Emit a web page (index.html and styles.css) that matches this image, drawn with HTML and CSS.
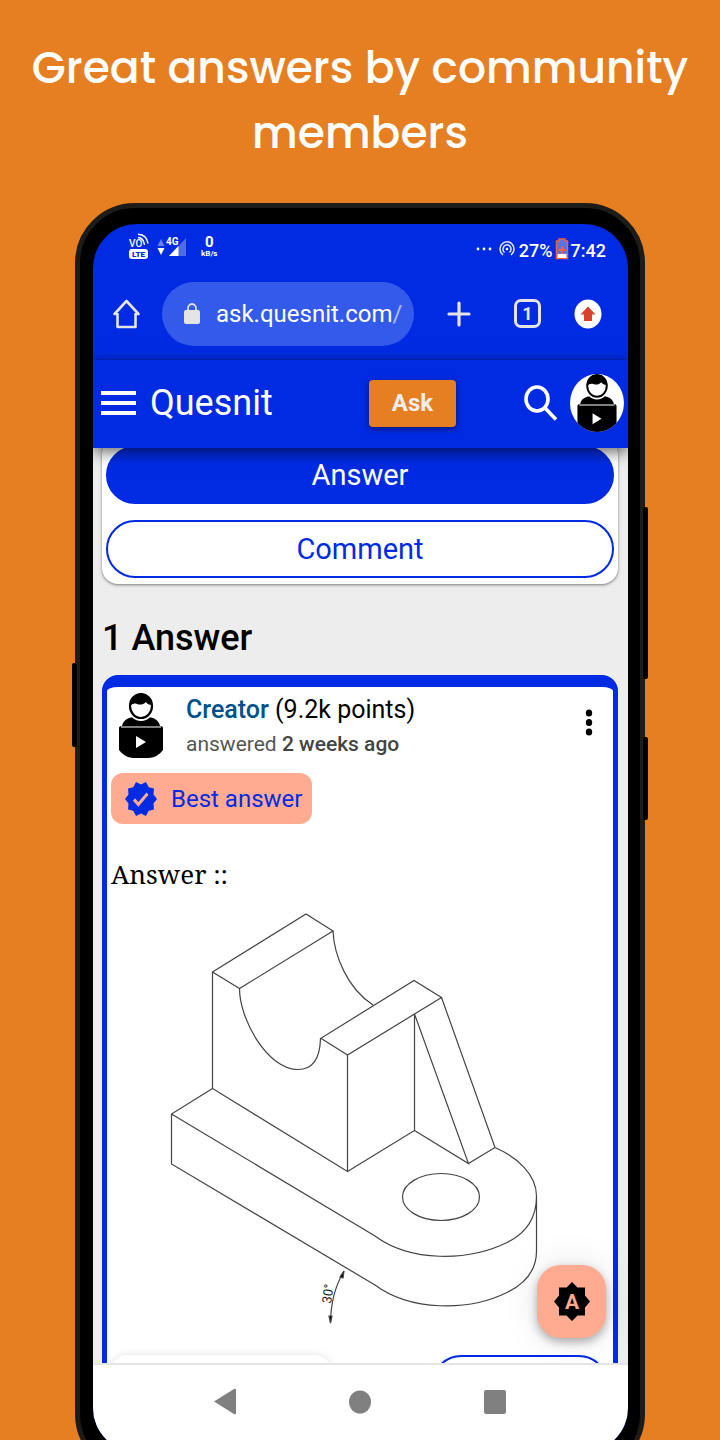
FILE: index.html
```html
<!DOCTYPE html>
<html lang="en">
<head>
<meta charset="utf-8">
<meta name="viewport" content="width=device-width, initial-scale=1">
<title>Quesnit – Great answers by community members</title>
<link rel="stylesheet" href="styles.css">
</head>
<body>
<svg class="defs" aria-hidden="true">
  <symbol id="person" viewBox="0 0 54 68" preserveAspectRatio="none">
    <path d="M8 34c0-6 6-10 13-10h12c7 0 13 4 13 10z"/>
    <ellipse cx="27" cy="14" rx="13" ry="14" fill="#fff"/>
    <ellipse cx="27" cy="13" rx="11" ry="12" fill="#fff" stroke="#000" stroke-width="2.200"/>
    <path d="M16 13C15 5 20 1 27 1s12 5 11 11c-3 0-5-1-6-3-3 3-6 3-9 2-3-1-5 0-7 2z"/>
    <path d="M5 35q0-2 3-2h38q3 0 3 2v22q-5 7-14 8H19Q10 64 5 57z"/>
    <path d="M7 34h40" stroke="#aaa" stroke-width="1.500"/>
    <path d="M22 43l10 6-10 6z" fill="#fff"/>
  </symbol>
</svg>
<main class="poster">
  <h1 class="headline">Great answers by community members</h1>
  <div class="phone">
    <span class="key key-left"></span>
    <span class="key key-power"></span>
    <span class="key key-volume"></span>
    <div class="screen">
      <div class="status">
        <svg class="volte" width="20" height="28" viewBox="0 0 20 28" role="img" aria-label="VoLTE">
          <text x="0" y="14" font-size="10" font-weight="500" fill="#fff">VO</text>
          <path d="M9 4.500q5.500 0 6.500 7.500M9 1.200q9 .500 10 9.500" fill="none" stroke="#fff" stroke-width="1.400"/>
          <rect y="16" width="19" height="10" rx="3" fill="#fff"/>
          <text x="9.500" y="24" font-size="8" font-weight="900" text-anchor="middle" fill="#002be3">LTE</text>
        </svg>
        <svg width="30" height="24" viewBox="0 0 30 24" role="img" aria-label="4G signal">
          <path d="M4 4l3.500 7h-7z" fill="#6680ee"/><path d="M.500 13h7L4 20z" fill="#fff"/>
          <path d="M29 3v18H12z" fill="#4d6cec"/><path d="M21.500 11v10H12z" fill="#fff"/>
          <text x="9" y="10" font-size="10" font-weight="700" fill="#fff">4G</text>
        </svg>
        <span class="rate"><b>0</b><small>kB/s</small></span>
        <span class="status-right">
          <svg width="16" height="8" viewBox="0 0 16 8" fill="#fff"><circle cx="2" cy="4" r="1.400"/><circle cx="8" cy="4" r="1.400"/><circle cx="14" cy="4" r="1.400"/></svg>
          <svg class="hotspot" width="16" height="18" viewBox="0 0 16 18" fill="none" stroke="#e4e8ff" stroke-width="1.500"><path d="M4 15A7 7.300 0 1 1 12 15M5.500 12.500A4 4.300 0 1 1 10.500 12.500"/><circle cx="8" cy="9" r="1.300" fill="#fff" stroke="none"/></svg>
          <span>27%</span>
          <svg width="14" height="22" viewBox="0 0 14 22"><path d="M1.500 3h2.500V1h6v2h2.500v17.500h-11z" fill="#5872e8" stroke="#f0623c" stroke-width="1.500"/><path d="M7 8v8M3.500 12h7" stroke="#f0623c" stroke-width="2"/><path d="M2.500 16h9v4h-9z" fill="#fff"/></svg>
          <time>7:42</time>
        </span>
      </div>
      <div class="browser">
        <button class="icon-btn" aria-label="Home"><svg width="28" height="30" viewBox="0 0 28 30" fill="none" stroke="#e4e4e4" stroke-width="2.600" stroke-linejoin="round" stroke-linecap="round"><path d="M1.500 15L13.500 2l12 13h-3V28h-18V15z"/></svg></button>
        <a class="url" href="#"><svg width="16" height="22" viewBox="0 0 16 22"><rect y="7" width="16" height="14" rx="2" fill="#e4e4e4"/><path d="M4 8V5.500a4 4.500 0 0 1 8 0V8" fill="none" stroke="#e4e4e4" stroke-width="1.800"/></svg><span>ask.quesnit.com<i>/</i></span></a>
        <button class="icon-btn" aria-label="New tab"><svg width="24" height="26" viewBox="0 0 24 26" stroke="#e4e4e4" stroke-width="3.200" stroke-linecap="round"><path d="M12 2v22M2 13h20"/></svg></button>
        <button class="icon-btn tabs" aria-label="Tabs">1</button>
        <button class="icon-btn" aria-label="Update browser"><svg width="28" height="30" viewBox="0 0 28 30"><ellipse cx="14" cy="15" rx="13.500" ry="14.500" fill="#fff"/><path d="M14 7.500l7.500 8H18V22h-8v-6.500H6.500z" fill="#d9412f"/></svg></button>
      </div>
      <header class="appbar">
        <button class="icon-btn" aria-label="Menu"><svg width="35" height="26" viewBox="0 0 35 26" stroke="#fff" stroke-width="4"><path d="M0 3h35M0 13h35M0 23h35"/></svg></button>
        <a class="brand" href="#">Quesnit</a>
        <button class="ask">Ask</button>
        <button class="icon-btn" aria-label="Search"><svg width="34" height="36" viewBox="0 0 34 36" fill="none" stroke="#fff" stroke-width="3.600"><ellipse cx="13" cy="14" rx="11" ry="12"/><path d="M20.500 22.500l11.500 12"/></svg></button>
        <a class="me" href="#" aria-label="Profile"><svg width="48" height="62"><use href="#person" width="48" height="62"/></svg></a>
      </header>
      <div class="content">
        <section class="question">
          <button class="pill pill-solid">Answer</button>
          <button class="pill">Comment</button>
        </section>
        <h2 class="count">1 Answer</h2>
        <article class="answer">
          <div class="author">
            <svg class="avatar" width="54" height="68"><use href="#person" width="54" height="68"/></svg>
            <div class="who">
              <p class="name"><a href="#">Creator</a> (9.2k points)</p>
              <p class="when">answered <b>2 weeks ago</b></p>
            </div>
            <button class="icon-btn more" aria-label="More options"><svg width="8" height="28" viewBox="0 0 8 28"><ellipse cx="4" cy="4" rx="3.200" ry="3.500"/><ellipse cx="4" cy="13.500" rx="3.200" ry="3.500"/><ellipse cx="4" cy="23" rx="3.200" ry="3.500"/></svg></button>
          </div>
          <div class="best">
            <svg width="32" height="34" viewBox="1 1 22 21" preserveAspectRatio="none" fill="#002be3"><path d="M23 11.500l-2.400-2.800.300-3.700-3.600-.800L15.400 1 12 2.500 8.600 1 6.700 4.200l-3.600.800.300 3.700L1 11.500l2.400 2.800-.300 3.700 3.600.800L8.600 22l3.400-1.500 3.400 1.500 1.900-3.200 3.600-.800-.300-3.700z"/><path d="M7.200 11.800l3 3 6.300-6.600" fill="none" stroke="#ffab91" stroke-width="2"/></svg>
            <span>Best answer</span>
          </div>
          <p class="body">Answer ::</p>
          <svg class="drawing" viewBox="111 905 498 440" fill="none" stroke="#444" stroke-width="1.200" role="img" aria-label="Isometric drawing of a bracket with a 30 degree base">
            <path d="M212.500 972L306 914l27 17-93.500 57.500zM333 931c1 25 15 58 40 74M239.500 988.500c0 31 28 81 58.500 81 15 0 22-12 22.500-31L414 980.500l27.500 17L347.500 1055l-27-17M212.500 972v116.500l135 83V1055M347.500 1171.500l67-41v-116.500l54 149.500-54-33M441.500 997.500L495 1147.500l-26.500 16M212.500 1088.500L171.500 1114v50L375 1285c35 26 93 27 133 7 20-10 28.500-24 28.500-41v-55M171.500 1114L375 1236c35 26 93 26 133 6 20-10 28.500-26 28.500-46 0-22-20-39-41.500-48.500M344 1271q-13 22-13.500 51"/>
            <ellipse cx="441" cy="1197" rx="38.500" ry="23.500"/>
            <path d="M344 1271l-1 7-3-1zM330.500 1323l-1.500-7h3z" fill="#000"/>
            <text x="0" y="0" transform="translate(331 1304) rotate(-82)" font-size="13" fill="#222" stroke="none">30°</text>
          </svg>
          <div class="actions">
            <button class="flat" aria-label="Vote"></button>
            <button class="outline" aria-label="Comment on answer"></button>
          </div>
        </article>
        <button class="fab" aria-label="Toggle theme"><svg width="36" height="39" viewBox="0 0 36 39"><path d="M18 0l5.500 5.500H31v8l5 6-5 6v8h-7.500L18 39l-5.500-5.500H5v-8l-5-6 5-6v-8h7.500z"/><text x="18" y="27" text-anchor="middle" font-size="21" font-weight="700" fill="#ffab91">A</text></svg></button>
      </div>
      <nav class="sysnav" aria-label="System navigation">
        <button class="icon-btn" aria-label="Back"><svg width="22" height="27" viewBox="0 0 22 27" fill="#808080"><path d="M0 13.500L20 1q2-1 2 1v23q0 2-2 1z"/></svg></button>
        <button class="icon-btn" aria-label="Home screen"><svg width="22" height="24" viewBox="0 0 22 24" fill="#808080"><ellipse cx="11" cy="12" rx="11" ry="11.500"/></svg></button>
        <button class="icon-btn" aria-label="Recent apps"><svg width="22" height="24" viewBox="0 0 22 24" fill="#808080"><rect width="22" height="24" rx="2"/></svg></button>
      </nav>
    </div>
  </div>
</main>
</body>
</html>
```

FILE: styles.css
```css
* { box-sizing: border-box; }
body {
  margin: 0;
  background: #e67f22;
  font-family: Roboto, "Liberation Sans", sans-serif;
}
p, h1, h2 { margin: 0; }
a { color: inherit; text-decoration: none; }
button { font: inherit; color: inherit; border: 0; padding: 0; background: none; }
svg { display: block; flex: none; }
.defs { position: absolute; width: 0; height: 0; }

.poster {
  display: flex;
  flex-direction: column;
  height: 100vh;
  overflow: hidden;
}
.headline {
  padding: 35px 24px 38px;
  color: #fff;
  font-family: Poppins, Inter, sans-serif;
  font-size: 44px;
  font-weight: 500;
  line-height: 65px;
  text-align: center;
}
.phone {
  position: relative;
  flex: 1;
  display: flex;
  min-height: 0;
  margin: 0 75px -34px;
  padding: 16px 12px 17px 13px;
  background: #000;
  border: 5px solid #1c1c1b;
  border-radius: 60px;
}
.key { position: absolute; width: 5px; background: #000; border-radius: 2px; }
.key-left { left: -8px; top: 455px; height: 84px; }
.key-power { right: -8px; top: 299px; height: 172px; }
.key-volume { right: -8px; top: 529px; height: 83px; }
.screen {
  flex: 1;
  display: flex;
  flex-direction: column;
  min-width: 0;
  overflow: hidden;
  background: #002be3;
  border-radius: 44px;
}
.icon-btn { display: flex; align-items: center; justify-content: center; }

.status {
  display: flex;
  align-items: center;
  height: 46px;
  padding: 0 22px 0 36px;
  gap: 8px;
  color: #fff;
}
.rate { display: flex; flex-direction: column; align-items: center; margin-left: 6px; line-height: 10px; }
.rate b { font-size: 15px; line-height: 14px; }
.rate small { font-size: 8px; font-weight: 700; }
.status-right {
  display: flex;
  align-items: center;
  gap: 2px;
  margin-left: auto;
  padding-top: 6px;
  font-size: 18px;
  font-weight: 500;
}
.status-right svg { margin-bottom: 3px; }
.status-right .hotspot { margin-left: 5px; margin-right: 2px; }

.browser {
  display: flex;
  align-items: center;
  gap: 33px;
  height: 90px;
  padding: 0 26px 2px 20px;
  border-bottom: 1px solid #0026ca;
}
.url {
  display: flex;
  align-items: center;
  gap: 16px;
  width: 252px;
  height: 64px;
  margin-left: -12px;
  padding-left: 22px;
  border-radius: 32px;
  background: #335aea;
  color: #fff;
  font-size: 24px;
}
.url i { font-style: normal; opacity: .6; }
.tabs {
  width: 27px;
  height: 29px;
  margin-left: 10px;
  border: 3px solid #e4e4e4;
  border-radius: 7px;
  color: #e4e4e4;
  font-size: 18px;
  font-weight: 700;
}

.appbar {
  position: relative;
  z-index: 1;
  display: flex;
  align-items: center;
  height: 88px;
  padding: 0 4px 2px 8px;
  background: #002be3;
  box-shadow: 0 4px 14px rgba(0, 0, 0, .6);
  color: #fff;
}
.brand { flex: 1; margin-left: 14px; font-size: 36px; }
.ask {
  width: 87px;
  height: 47px;
  margin-right: 68px;
  border-radius: 4px;
  background: #e67f22;
  box-shadow: 0 2px 6px rgba(0, 0, 0, .5);
  color: #eee;
  font-size: 24px;
  font-weight: 700;
}
.me {
  display: flex;
  justify-content: center;
  width: 54px;
  height: 58px;
  margin-left: 12px;
  overflow: hidden;
  border-radius: 50%;
  background: #fff;
}

.content {
  position: relative;
  flex: 1;
  min-height: 0;
  padding: 0 10px 0 9px;
  overflow: hidden;
  background: #ededed;
}
.question {
  display: flex;
  flex-direction: column;
  gap: 16px;
  margin-top: -10px;
  padding: 8px 4px 6px;
  border-radius: 16px;
  background: #fff;
  box-shadow: 0 1px 3px rgba(0, 0, 0, .5);
}
.pill {
  height: 58px;
  border: 2px solid #002be3;
  border-radius: 29px;
  background: #fff;
  color: #002be3;
  font-size: 29px;
}
.pill-solid { background: #002be3; color: #fff; }
.count {
  padding: 32px 0 15px;
  font-size: 36px;
  font-weight: 500;
  line-height: 44px;
}
.answer {
  padding: 6px 4px 5px;
  border: solid #002be3;
  border-width: 12px 5px;
  border-radius: 16px;
  background: #fff;
}
.author { display: flex; align-items: flex-start; }
.avatar { margin-left: 3px; }
.who { flex: 1; margin-left: 18px; }
.name { font-size: 25px; line-height: 34px; }
.name a { color: #00508c; font-weight: 500; }
.when { color: #555; font-size: 21px; line-height: 34px; }
.when b { color: #444; font-weight: 500; }
.more { margin: 16px 16px 0 0; }
.best {
  display: flex;
  align-items: center;
  gap: 14px;
  width: max-content;
  height: 51px;
  margin-top: 12px;
  padding: 0 10px 0 14px;
  border-radius: 12px;
  background: #ffab91;
  color: #002be3;
  font-size: 24px;
}
.body {
  padding-top: 32px;
  font-family: "Noto Serif", "Liberation Serif", serif;
  font-size: 26px;
  line-height: 36px;
}
.drawing { width: 100%; margin-top: 13px; }
.actions { display: flex; justify-content: space-between; margin-top: 10px; }
.flat { width: 220px; height: 56px; border-radius: 16px; box-shadow: 0 0 8px rgba(0, 0, 0, .12); }
.outline { width: 176px; height: 58px; margin-right: 1px; border: 2px solid #002be3; border-radius: 29px; }
.fab {
  position: absolute;
  right: 22px;
  bottom: 25px;
  display: flex;
  align-items: center;
  justify-content: center;
  width: 69px;
  height: 73px;
  border-radius: 24px;
  background: #ffab91;
  box-shadow: 0 4px 10px rgba(0, 0, 0, .3), 0 0 36px rgba(0, 0, 0, .1);
}
.sysnav {
  display: flex;
  justify-content: center;
  gap: 113px;
  height: 89px;
  padding: 0 2px 14px 0;
  border-top: 2px solid #e4e4e4;
  background: #fff;
}
```
